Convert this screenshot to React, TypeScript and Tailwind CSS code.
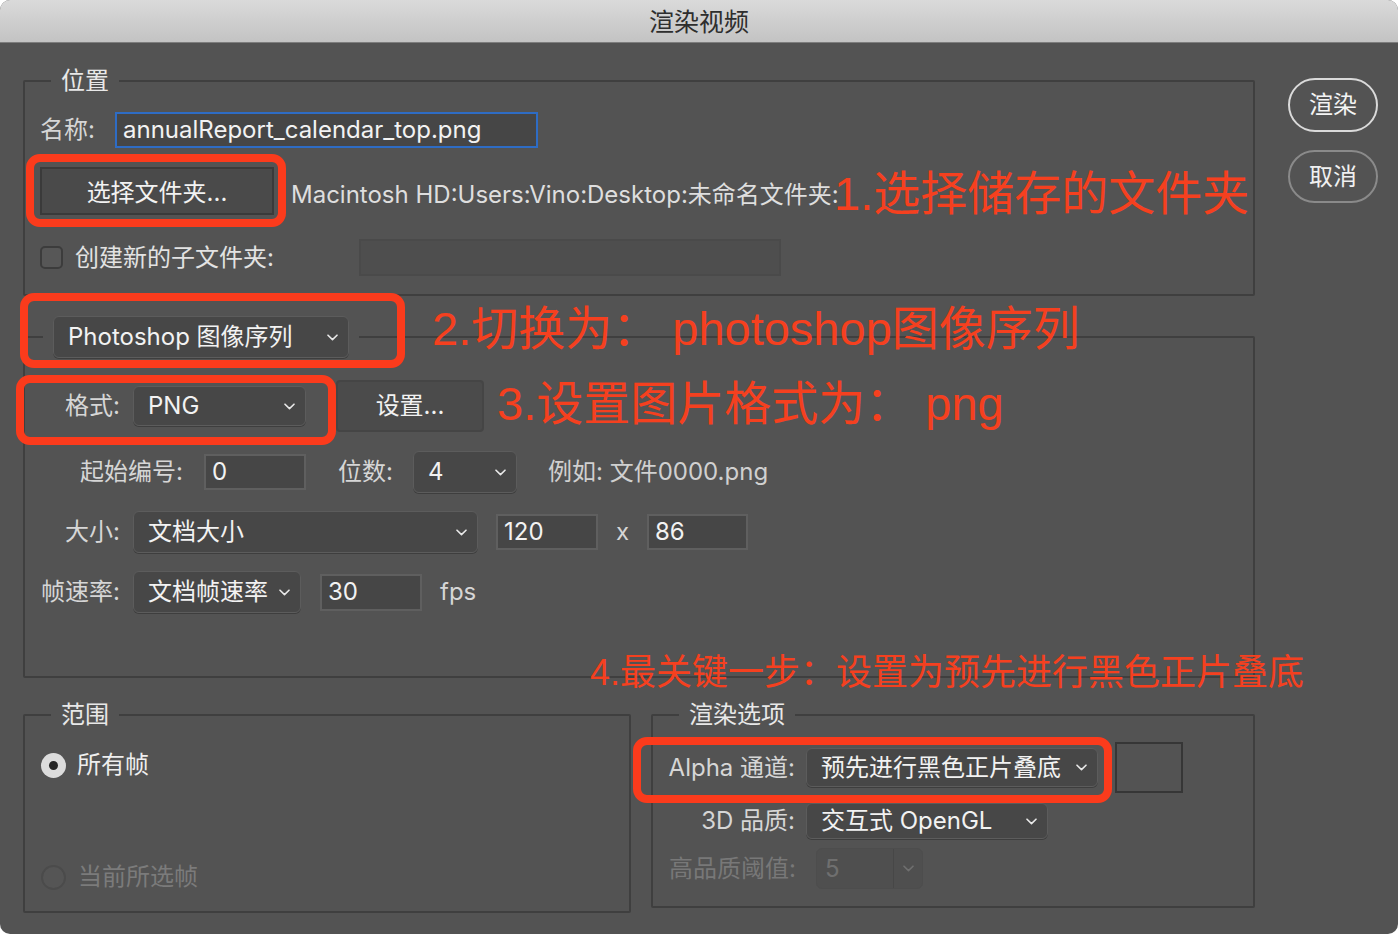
import React from 'react';

const Chevron: React.FC<{ dim?: boolean }> = ({ dim }) => (
  <svg width="11" height="7" viewBox="0 0 11 7" className={dim ? 'text-[#6f6f6f]' : 'text-[#e8e8e8]'}>
    <path d="M1 1.2 L5.5 5.6 L10 1.2" fill="none" stroke="currentColor" strokeWidth="1.6" strokeLinecap="round" strokeLinejoin="round" />
  </svg>
);

const Select: React.FC<{ className: string; children: React.ReactNode }> = ({ className, children }) => (
  <div className={`flex items-center justify-between rounded-[6px] border border-[#5c5c5c] bg-[#474747] pl-[14px] pr-[10px] text-[#f2f2f2] shadow-[0_1px_0_#3e3e3e] ${className}`}>
    <span className="whitespace-nowrap">{children}</span>
    <Chevron />
  </div>
);

const Field: React.FC<{ className: string; children?: React.ReactNode }> = ({ className, children }) => (
  <div className={`flex items-center border-2 border-[#5f5f5f] bg-[#464646] pl-[6px] text-[#f2f2f2] ${className}`}>{children}</div>
);

const Legend: React.FC<{ children: React.ReactNode }> = ({ children }) => (
  <legend className="ml-[26px] px-[10px] text-[24px] leading-[32px] text-[#e8e8e8]">{children}</legend>
);

const RedBox: React.FC<{ className: string }> = ({ className }) => (
  <div className={`absolute rounded-[14px] border-[8px] border-[#fb3b1c] ${className}`} />
);

const Note: React.FC<{ className: string; children: React.ReactNode }> = ({ className, children }) => (
  <div className={`absolute whitespace-nowrap leading-none text-[#f5401f] font-['Liberation_Sans','Noto_Sans_CJK_SC',sans-serif] ${className}`}>{children}</div>
);

export default function App() {
  return (
    <div className="relative h-[936px] w-[1398px] overflow-hidden bg-white text-[24px] font-['Inter','Noto_Sans_CJK_SC',sans-serif]">
      <div className="flex h-[934px] flex-col overflow-hidden rounded-[10px] bg-[#535353]">
        {/* title bar */}
        <div className="flex h-[43px] shrink-0 items-center justify-center border-b border-[#7d7d7d] bg-linear-to-b from-[#dadada] to-[#c3c3c3] pt-[4px] text-[25px] text-[#2e2e2e]">
          渲染视频
        </div>

        <div className="flex items-start pl-[23px] pt-[22px]">
          <div className="flex w-[1232px] flex-col">
            {/* 位置 */}
            <fieldset className="rounded-[2px] border-2 border-[#3f3f3f]">
              <Legend>位置</Legend>
              <div className="flex flex-col pb-[18px] pl-[15px] pt-[15px]">
                <div className="flex h-[36px] items-center">
                  <span className="w-[75px] text-[#d6d6d6]">名称:</span>
                  <Field className="h-[36px] w-[423px] !border-[#2e6cc4]">annualReport_calendar_top.png</Field>
                </div>
                <div className="mt-[19px] flex h-[48px] items-center">
                  <div className="flex h-[48px] w-[234px] items-center justify-center border-2 border-[#3a3a3a] bg-[#4a4a4a] pt-[3px] text-[#f2f2f2]">
                    选择文件夹...
                  </div>
                  <span className="ml-[17px] whitespace-nowrap pt-[7px] text-[24px] text-[#dedede]">Macintosh HD:Users:Vino:Desktop:未命名文件夹:</span>
                </div>
                <div className="mt-[24px] flex h-[37px] items-center">
                  <div className="h-[23px] w-[23px] rounded-[5px] border-2 border-[#3c3c3c] bg-[#575757]" />
                  <span className="ml-[12px] w-[284px] text-[#e2e2e2]">创建新的子文件夹:</span>
                  <div className="h-[37px] w-[422px] border-2 border-[#4a4a4a] bg-[#4e4e4e]" />
                </div>
              </div>
            </fieldset>

            {/* 输出格式 */}
            <fieldset className="mt-[20px] rounded-[2px] border-2 border-[#3f3f3f]">
              <legend className="ml-[18px] px-[10px]">
                <Select className="h-[42px] w-[296px]">Photoshop 图像序列</Select>
              </legend>
              <div className="flex flex-col pb-[63px] pt-[22px]">
                <div className="flex h-[52px] items-center">
                  <span className="w-[95px] text-right text-[#d6d6d6]">格式:</span>
                  <Select className="ml-[13px] h-[40px] w-[173px]">PNG</Select>
                  <div className="ml-[30px] flex h-[52px] w-[148px] items-center justify-center rounded-[4px] border-2 border-[#454545] bg-[#4b4b4b] text-[#f2f2f2]">
                    设置...
                  </div>
                </div>
                <div className="mt-[19px] flex h-[42px] items-center">
                  <span className="w-[158px] text-right text-[#d6d6d6]">起始编号:</span>
                  <Field className="ml-[21px] h-[36px] w-[102px]">0</Field>
                  <span className="ml-[32px] w-[55px] text-[#d6d6d6]">位数:</span>
                  <Select className="ml-[20px] h-[42px] w-[104px]">4</Select>
                  <span className="ml-[31px] text-[#d0d0d0]">例如: 文件0000.png</span>
                </div>
                <div className="mt-[18px] flex h-[42px] items-center">
                  <span className="w-[95px] text-right text-[#d6d6d6]">大小:</span>
                  <Select className="ml-[13px] h-[42px] w-[345px]">文档大小</Select>
                  <Field className="ml-[18px] h-[36px] w-[102px]">120</Field>
                  <span className="w-[49px] text-center text-[#d6d6d6]">x</span>
                  <Field className="h-[36px] w-[101px]">86</Field>
                </div>
                <div className="mt-[18px] flex h-[42px] items-center">
                  <span className="w-[95px] text-right text-[#d6d6d6]">帧速率:</span>
                  <Select className="ml-[13px] h-[42px] w-[168px]">文档帧速率</Select>
                  <Field className="ml-[19px] h-[37px] w-[102px]">30</Field>
                  <span className="ml-[18px] text-[#d6d6d6]">fps</span>
                </div>
              </div>
            </fieldset>

            <div className="mt-[21px] flex items-start gap-[20px]">
              {/* 范围 */}
              <fieldset className="w-[608px] rounded-[2px] border-2 border-[#3f3f3f]">
                <Legend>范围</Legend>
                <div className="flex flex-col pb-[20px] pl-[16px] pt-[20px]">
                  <div className="flex h-[28px] items-center">
                    <div className="flex h-[25px] w-[25px] items-center justify-center rounded-full bg-[#dcdcdc]">
                      <div className="h-[9px] w-[9px] rounded-full bg-[#262626]" />
                    </div>
                    <span className="ml-[11px] text-[#eeeeee]">所有帧</span>
                  </div>
                  <div className="mt-[84px] flex h-[28px] items-center">
                    <div className="h-[25px] w-[25px] rounded-full border-2 border-[#4b4b4b] bg-[#555555]" />
                    <span className="ml-[12px] text-[#7b7b7b]">当前所选帧</span>
                  </div>
                </div>
              </fieldset>

              {/* 渲染选项 */}
              <fieldset className="w-[604px] rounded-[2px] border-2 border-[#3f3f3f]">
                <Legend>渲染选项</Legend>
                <div className="flex flex-col pb-[17px] pt-[11px]">
                  <div className="flex h-[51px] items-center">
                    <span className="w-[142px] text-right text-[#d6d6d6]">Alpha 通道:</span>
                    <Select className="ml-[11px] h-[39px] w-[292px]">预先进行黑色正片叠底</Select>
                    <div className="ml-[17px] h-[51px] w-[68px] border-2 border-[#363636] bg-[#535353]" />
                  </div>
                  <div className="mt-[10px] flex h-[36px] items-center">
                    <span className="w-[142px] text-right text-[#d6d6d6]">3D 品质:</span>
                    <Select className="ml-[11px] h-[36px] w-[242px]">交互式 OpenGL</Select>
                  </div>
                  <div className="mt-[9px] flex h-[41px] items-center">
                    <span className="w-[143px] text-right text-[#787878]">高品质阈值:</span>
                    <div className="ml-[20px] flex h-[41px] w-[107px] rounded-[6px] border border-[#4d4d4d] bg-[#4f4f4f] text-[#6f6f6f]">
                      <span className="flex w-[77px] items-center border-r border-[#474747] pl-[8px]">5</span>
                      <span className="flex flex-1 items-center justify-center">
                        <Chevron dim />
                      </span>
                    </div>
                  </div>
                </div>
              </fieldset>
            </div>
          </div>

          {/* 按钮 */}
          <div className="ml-[33px] mt-[13px] flex flex-col gap-[18px]">
            <div className="flex h-[54px] w-[90px] items-center justify-center rounded-full border-2 border-[#dadada] text-[#f4f4f4]">渲染</div>
            <div className="flex h-[53px] w-[90px] items-center justify-center rounded-full border-2 border-[#8a8a8a] text-[#f0f0f0]">取消</div>
          </div>
        </div>
      </div>

      {/* annotations */}
      <RedBox className="left-[26px] top-[154px] h-[73px] w-[260px]" />
      <RedBox className="left-[20px] top-[293px] h-[75px] w-[385px]" />
      <RedBox className="left-[16px] top-[375px] h-[70px] w-[320px]" />
      <RedBox className="left-[633px] top-[737px] h-[66px] w-[479px]" />

      <Note className="left-[834px] top-[170px] text-[47px]">1.选择储存的文件夹</Note>
      <Note className="left-[432px] top-[305px] text-[47px]">2.切换为： photoshop图像序列</Note>
      <Note className="left-[497px] top-[380px] text-[47px]">3.设置图片格式为： png</Note>
      <Note className="left-[590px] top-[655px] text-[36px]">4.最关键一步：设置为预先进行黑色正片叠底</Note>
    </div>
  );
}
